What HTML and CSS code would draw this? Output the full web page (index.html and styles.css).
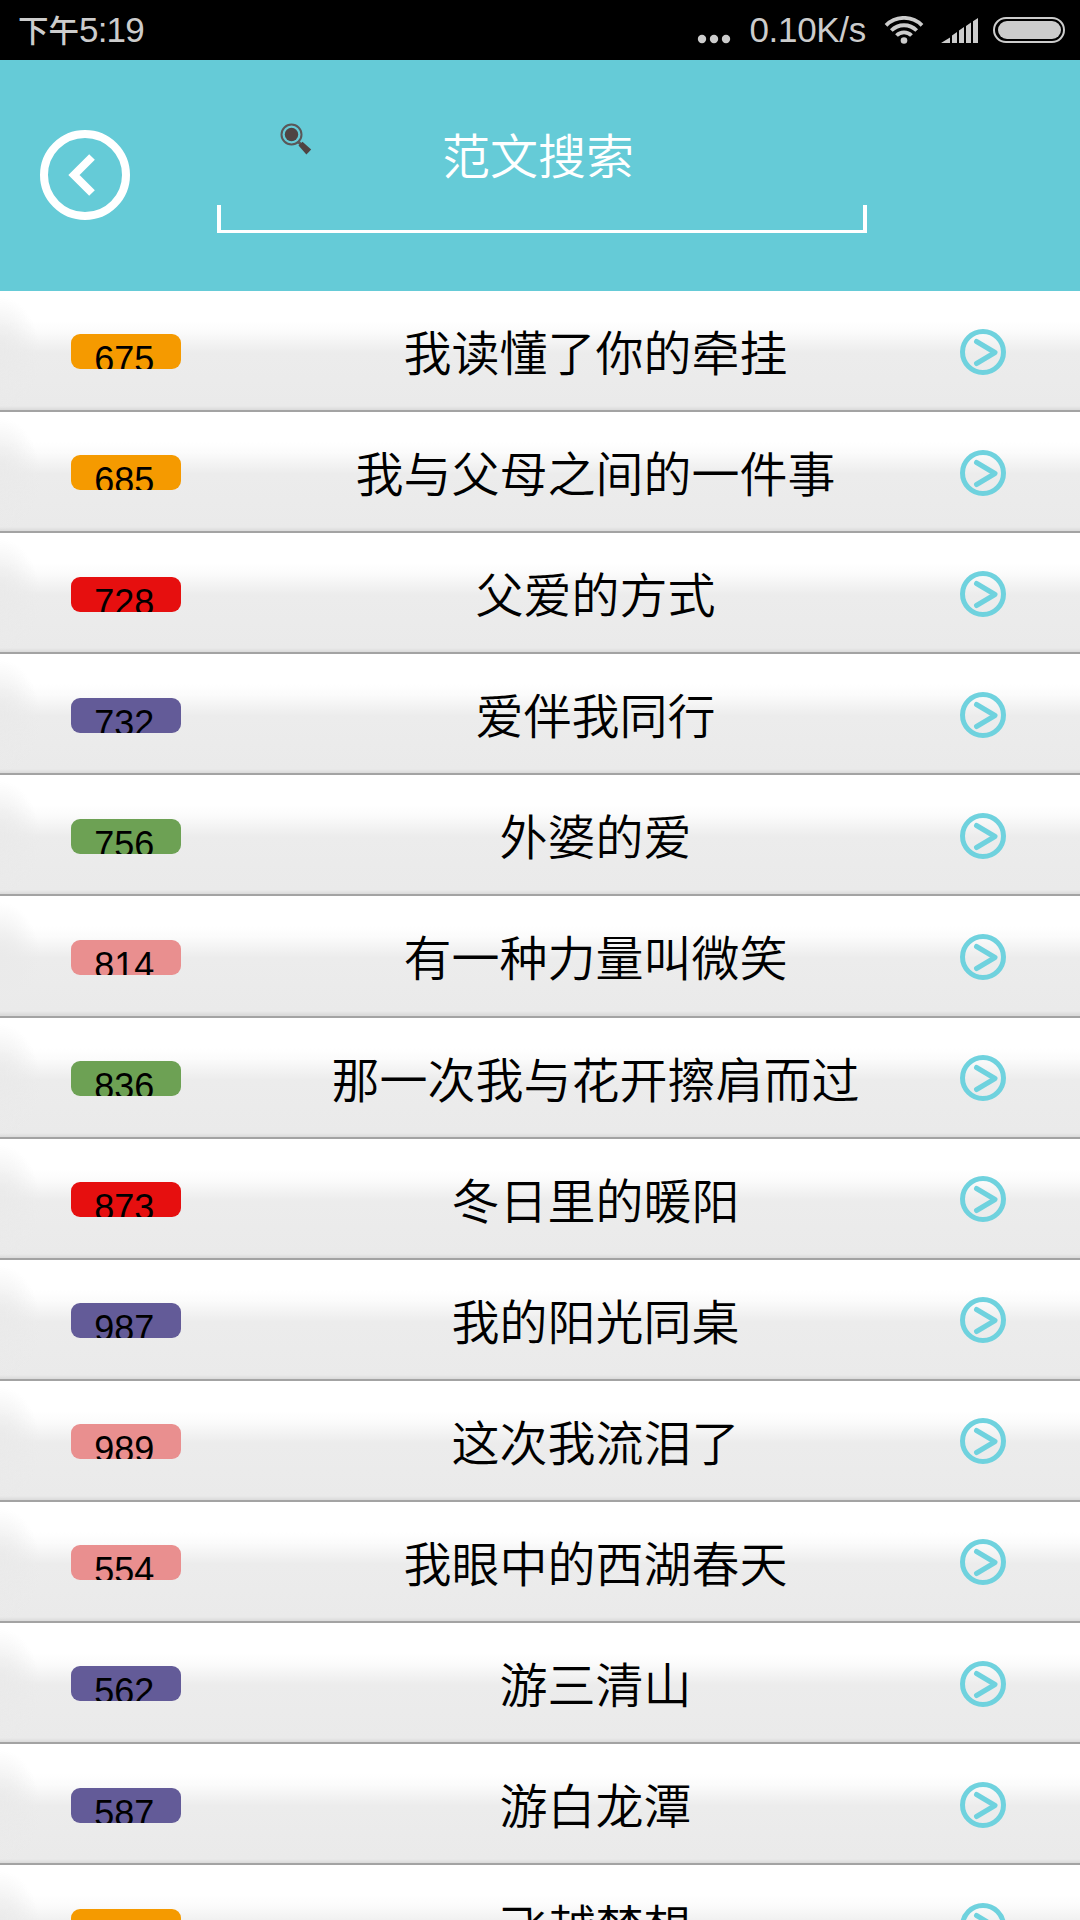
FILE: index.html
```html
<!DOCTYPE html>
<html lang="zh-CN">
<head>
  <meta charset="UTF-8">
  <meta name="viewport" content="width=device-width, initial-scale=1">
  <title>范文搜索</title>
  <link rel="stylesheet" href="styles.css">
</head>
<body>
  <div class="statusbar">
    <span class="time"><span class="ampm">下午</span>5:19</span>
    <svg class="dots" width="34" height="10" viewBox="0 0 34 10"><circle cx="5" cy="5" r="4.2"/><circle cx="17" cy="5" r="4.2"/><circle cx="29" cy="5" r="4.2"/></svg>
    <span class="speed">0.10K/s</span>
    <svg class="wifi" width="40" height="28" viewBox="0 0 40 28">
      <circle class="fill" cx="20" cy="24.5" r="3.3"/>
      <path d="M12.5 19.5a10.5 10.5 0 0 1 15 0M7.3 14.5a18 18 0 0 1 25.4 0M2 9.3a25.5 25.5 0 0 1 36 0"/>
    </svg>
    <svg class="signal" width="38" height="26" viewBox="0 0 38 26"><path d="M0 25l9-5.5V25zM11 25V17.5l5-3.5v11zM18 25V12.5l5-3.5v16zM25 25V8l5-3.5V25zM32 25V3.3L37 0v25z"/></svg>
    <svg class="battery" width="72" height="26" viewBox="0 0 72 26"><rect class="line" x="1" y="1" width="70" height="24" rx="12"/><rect x="5" y="4" width="63" height="18" rx="9"/></svg>
  </div>

  <header class="header">
    <svg class="back" width="90" height="90" viewBox="0 0 90 90">
      <circle cx="45" cy="45" r="41"/>
      <path d="M52 27L34 45L52 63"/>
    </svg>
    <div class="search">
      <div class="search-label">
        <svg class="magnifier" width="32" height="32" viewBox="0 0 32 32">
          <circle class="ring" cx="11.5" cy="11.5" r="10"/>
          <circle cx="11.5" cy="11.5" r="6.7"/>
          <path class="neck" d="M18.5 19l3 3"/>
          <path d="M18.5 22.5l4-3.8 8.7 7.9-4.8 5z"/>
        </svg>
        <h1>范文搜索</h1>
      </div>
      <div class="underline"></div>
    </div>
  </header>

  <svg class="defs" width="0" height="0">
    <symbol id="go" viewBox="0 0 46 46">
      <circle cx="23" cy="23" r="20.5"/>
      <path d="M16.5 12.5L35 23.5L16.5 34.5"/>
    </symbol>
  </svg>

  <ul class="list">
    <li><span class="num orange">675</span><span class="name">我读懂了你的牵挂</span><svg class="go"><use href="#go"/></svg></li>
    <li><span class="num orange">685</span><span class="name">我与父母之间的一件事</span><svg class="go"><use href="#go"/></svg></li>
    <li><span class="num red">728</span><span class="name">父爱的方式</span><svg class="go"><use href="#go"/></svg></li>
    <li><span class="num purple">732</span><span class="name">爱伴我同行</span><svg class="go"><use href="#go"/></svg></li>
    <li><span class="num green">756</span><span class="name">外婆的爱</span><svg class="go"><use href="#go"/></svg></li>
    <li><span class="num pink">814</span><span class="name">有一种力量叫微笑</span><svg class="go"><use href="#go"/></svg></li>
    <li><span class="num green">836</span><span class="name">那一次我与花开擦肩而过</span><svg class="go"><use href="#go"/></svg></li>
    <li><span class="num red">873</span><span class="name">冬日里的暖阳</span><svg class="go"><use href="#go"/></svg></li>
    <li><span class="num purple">987</span><span class="name">我的阳光同桌</span><svg class="go"><use href="#go"/></svg></li>
    <li><span class="num pink">989</span><span class="name">这次我流泪了</span><svg class="go"><use href="#go"/></svg></li>
    <li><span class="num pink">554</span><span class="name">我眼中的西湖春天</span><svg class="go"><use href="#go"/></svg></li>
    <li><span class="num purple">562</span><span class="name">游三清山</span><svg class="go"><use href="#go"/></svg></li>
    <li><span class="num purple">587</span><span class="name">游白龙潭</span><svg class="go"><use href="#go"/></svg></li>
    <li><span class="num orange"></span><span class="name">飞越梦想</span><svg class="go"><use href="#go"/></svg></li>
  </ul>
</body>
</html>
```
FILE: styles.css
```css
* { box-sizing: border-box; }
body {
  margin: 0;
  height: 1920px;
  display: flex;
  flex-direction: column;
  overflow: hidden;
  font-family: "Liberation Sans", "Noto Sans CJK SC", sans-serif;
  background: #fff;
}
svg { display: block; flex: none; }

/* 状态栏 */
.statusbar {
  height: 60px;
  flex: none;
  display: flex;
  align-items: center;
  padding: 0 15px 0 18px;
  background: #000;
  color: #ccc;
  fill: #ccc;
  font-size: 35px;
  line-height: 60px;
}
.time { letter-spacing: -0.8px; }
.ampm { font-size: 30.5px; font-weight: 500; letter-spacing: 0; }
.dots { margin: 18px 18px 0 auto; }
.speed { letter-spacing: -0.3px; }
.wifi { margin-left: 18px; fill: none; stroke: #ccc; stroke-width: 3.8; }
.wifi .fill { fill: #ccc; stroke: none; }
.signal { margin: 2px 0 0 17px; }
.battery { margin-left: 14px; }
.battery .line { fill: none; stroke: #ccc; stroke-width: 2; }

/* 标题和搜索 */
.header {
  height: 231px;
  flex: none;
  display: flex;
  align-items: flex-start;
  padding: 0 40px;
  background: #65cbd7;
}
.back { margin-top: 70px; fill: none; stroke: #fff; stroke-width: 8; }
.search { width: 650px; margin-left: 87px; }
.search-label { height: 145px; display: flex; align-items: flex-start; padding: 63px 0 0 63px; }
.search-label h1 {
  margin: 3px 0 0 130px;
  font-size: 48px;
  font-weight: 350;
  line-height: 64px;
  color: #fff;
}
.magnifier { fill: #4f4443; }
.magnifier .ring { fill: none; stroke: #5a5758; stroke-width: 2; }
.magnifier .neck { stroke: #5a5758; stroke-width: 3; }
.underline { height: 28px; border: solid #fff; border-width: 0 4px 3px; }

/* 列表 */
.defs { position: absolute; }
.list { margin: 0; padding: 0; list-style: none; }
.list li {
  height: 121.1px;
  display: flex;
  align-items: flex-start;
  padding: 0 74px 0 71px;
  border-bottom: 2px solid #a3a3a3;
  background:
    radial-gradient(ellipse 40px 56px at 0 62px, #eaeaea 0, #eaeaeaaa 45%, #eaeaea00 100%),
    linear-gradient(#fff 0, #fff 30px, #fbfbfb 41px, #f3f3f3 52px, #ececec 62px, #eaeaea 115px, #dadada 119px);
}
.num {
  width: 109.5px;
  height: 35px;
  margin-top: 43.4px;
  padding-right: 3px;
  border-radius: 9px;
  overflow: hidden;
  font-size: 36px;
  line-height: 51px;
  text-align: center;
  color: #000;
}
.orange { background: #f59a00; }
.red { background: #e60f0f; }
.purple { background: #635b98; }
.green { background: #6da154; }
.pink { background: #e98f8f; }
.name {
  width: 600px;
  margin: 29px 0 0 115px;
  font-size: 48px;
  font-weight: 350;
  line-height: 70px;
  text-align: center;
  white-space: nowrap;
  color: #000;
}
.go {
  width: 46px;
  height: 46px;
  margin: 37.5px 0 0 auto;
  fill: none;
  stroke: #6fd2de;
  stroke-width: 5;
  stroke-linecap: round;
  stroke-linejoin: round;
}
```
